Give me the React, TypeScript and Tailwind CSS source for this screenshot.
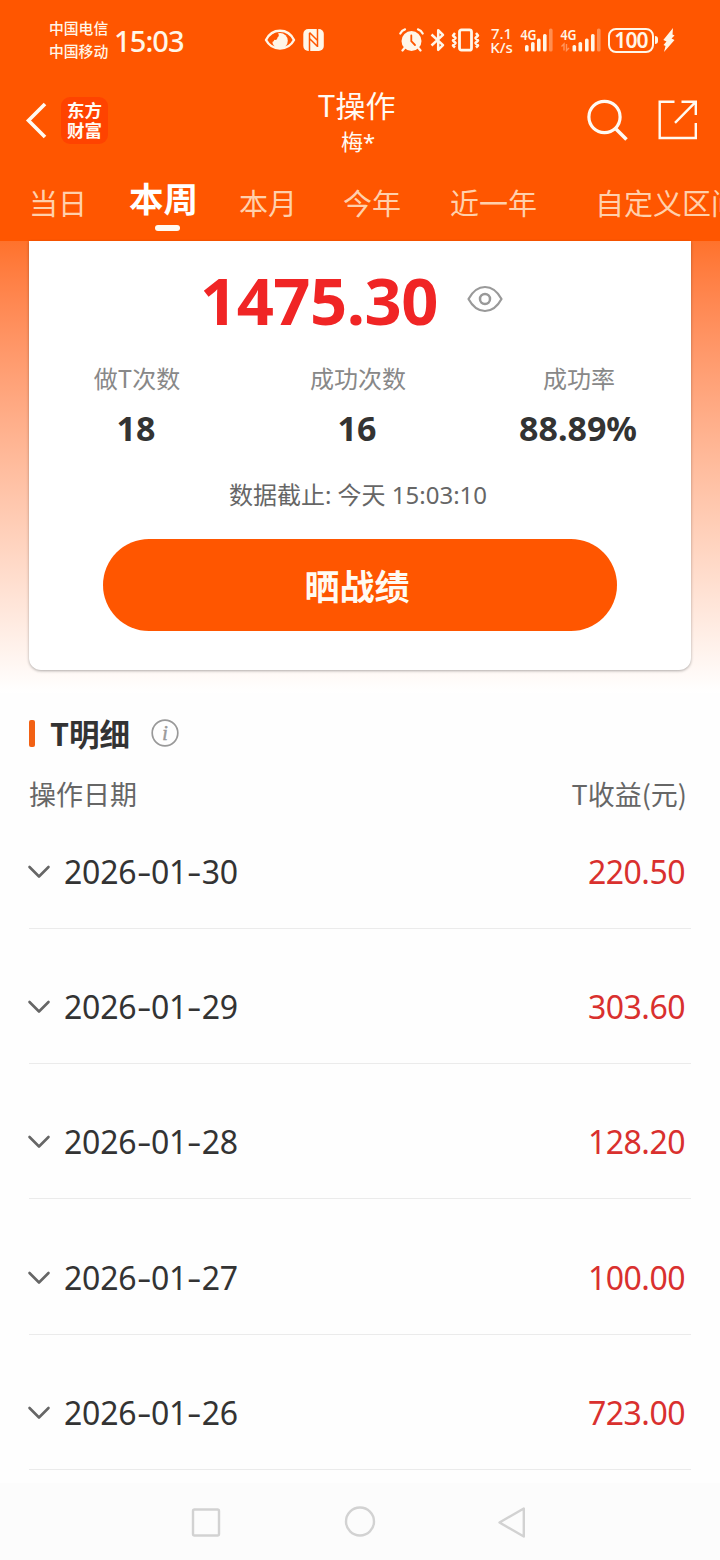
import React from "react";

const records = [
  { date: "2026-01-30", profit: "220.50" },
  { date: "2026-01-29", profit: "303.60" },
  { date: "2026-01-28", profit: "128.20" },
  { date: "2026-01-27", profit: "100.00" },
  { date: "2026-01-26", profit: "723.00" },
];

function SignalBars({ levels }: { levels: number[][] }) {
  return (
    <>
      {levels.map(([x, y, o], i) => (
        <rect key={i} x={x} y={y} width="3.6" height={23.5 - y} rx="1.6" fillOpacity={o} />
      ))}
    </>
  );
}

function StatusBar() {
  return (
    <div className="flex h-20 items-center pl-[49px] text-[#fff6e8]">
      <div className="w-[65px] shrink-0 pb-px text-[14.8px] leading-[22.5px] font-medium whitespace-nowrap">
        <div>中国电信</div>
        <div>中国移动</div>
      </div>
      <div className="w-[150px] shrink-0 pt-[2px] font-['Noto_Sans','Noto_Sans_CJK_SC',sans-serif] text-[29px] leading-8 font-medium tracking-[-0.9px]">
        15:03
      </div>
      <svg className="mr-[7px] shrink-0" width="32" height="24" viewBox="0 0 32 24" fill="none">
        <path d="M2 12C8 -.3 24 -.3 30 12C24 23.300 8 23.300 2 12Z" stroke="currentColor" strokeWidth="2.400" strokeLinejoin="round" />
        <circle cx="16" cy="12.800" r="7.800" fill="currentColor" />
        <path d="M6.500 11.500Q8 5 13.800 4.800Q16 8 13.500 9.500Q13.500 12.500 10.500 11.800Q9.500 14 8 14Z" fill="#ff5600" />
      </svg>
      <svg className="shrink-0" width="21" height="24" viewBox="0 0 21 24">
        <rect x=".3" y="1" width="20.500" height="22" rx="5" fill="currentColor" />
        <path d="M6.500 5V23M14.500 1V19M6.500 4.500L14.500 12.500M6.500 10.500L14.500 18.500" fill="none" stroke="#ff5600" strokeWidth="1.500" />
      </svg>
      <svg className="ml-[75px] shrink-0" width="25" height="24" viewBox="0 0 25 24" fill="none" stroke="currentColor" strokeLinecap="round">
        <circle cx="12.500" cy="13" r="10" fill="currentColor" stroke="none" />
        <path d="M1.300 5.500Q2.800 2.300 6 1.400M19 1.400Q22.200 2.300 23.700 5.500M5.500 20L3.500 22.500M19.500 20L21.500 22.500" strokeWidth="2.200" />
        <path d="M12.300 7.500V13.200L16 17" stroke="#ff5600" strokeWidth="1.800" />
      </svg>
      <svg className="ml-[6px] shrink-0" width="16" height="24" viewBox="0 0 16 24" fill="none" stroke="currentColor" strokeWidth="2.500" strokeLinejoin="round">
        <path d="M1.500 6.500L13 17.200L8.200 21.800V2.200L13 6.800L1.500 17.500" />
      </svg>
      <svg className="ml-[5px] shrink-0" width="29" height="24" viewBox="0 0 29 24" fill="none" stroke="currentColor" strokeWidth="2.500" strokeLinejoin="round">
        <rect x="8.500" y="1.800" width="12" height="20.400" rx="2" strokeWidth="2.800" />
        <path d="M4 5L2 7.500L4.500 10L2 12.500L4.500 15L2 17.500L4 19.500M25 5L27 7.500L24.500 10L27 12.500L24.500 15L27 17.500L25 19.500" />
      </svg>
      <div className="ml-[8px] w-[27px] shrink-0 text-center font-['Noto_Sans',sans-serif] text-[15px] leading-[14px] font-medium">
        <div>7.1</div>
        <div>K/s</div>
      </div>
      <svg className="ml-[5px] shrink-0" width="34" height="24" viewBox="0 0 34 24" fill="currentColor">
        <text x="0.500" y="12" fontSize="14" fontWeight="600" textLength="16" lengthAdjust="spacingAndGlyphs" fontFamily="Noto Sans">4G</text>
        <SignalBars levels={[[5, 17, 1], [11, 14, 1], [17, 10.5, 1], [23, 6, 1], [29, 0.5, 0.35]]} />
      </svg>
      <svg className="ml-[6px] shrink-0" width="42" height="24" viewBox="0 0 42 24" fill="currentColor">
        <text x="0.500" y="12" fontSize="14" fontWeight="600" textLength="16" lengthAdjust="spacingAndGlyphs" fontFamily="Noto Sans">4G</text>
        <path d="M1.500 18.500L4 16V22.500M6.500 16V22.500L9 20" fill="none" stroke="currentColor" strokeOpacity=".4" strokeWidth="1.400" />
        <SignalBars levels={[[12.5, 17, 1], [18.5, 14, 1], [25, 10.5, 1], [31, 6, 1], [37, 0.5, 0.35]]} />
      </svg>
      <div className="ml-[6px] flex h-[25px] w-[46px] shrink-0 items-center justify-center rounded-[8px] border-2 border-current font-['Noto_Sans',sans-serif] text-[21px] leading-5 font-semibold tracking-[-0.8px]">
        100
      </div>
      <div className="ml-px h-2 w-[3px] shrink-0 rounded-r-full bg-current" />
      <svg className="ml-[5px] shrink-0" width="12" height="24" viewBox="0 0 12 24" fill="currentColor">
        <path d="M10 0L.3 12L3.500 13.500L.5 17L2.500 18L1 24L11.500 12L8.500 10.500L11.500 7.500L9.500 6.500Z" />
      </svg>
    </div>
  );
}

function TitleBar() {
  return (
    <div className="flex h-[80px] items-center text-[#fffaf2]">
      <svg className="ml-6 shrink-0" width="24" height="38" viewBox="0 0 24 38" fill="none" stroke="currentColor" strokeWidth="3.600">
        <path d="M21 3L4.500 19.500L21 36" />
      </svg>
      <div className="ml-[13px] flex h-[47px] w-[47px] shrink-0 flex-col items-center justify-center rounded-[9px] bg-[#ff4300] font-['Noto_Sans_CJK_SC',sans-serif] text-[17.500px] leading-[20px] font-bold">
        <span>东方</span>
        <span>财富</span>
      </div>
      <div className="w-[497px] shrink-0 pt-[3px] text-center">
        <div className="text-[30px] leading-[38px]">T操作</div>
        <div className="pl-[3px] text-[22px] leading-[35px]">
          梅<span className="font-['Noto_Sans',sans-serif]">*</span>
        </div>
      </div>
      <svg className="-ml-[21px] shrink-0" width="44" height="44" viewBox="0 0 44 44" fill="none" stroke="currentColor" strokeWidth="3.200">
        <circle cx="20.500" cy="19" r="15.600" />
        <path d="M31.500 30.500L42.500 41.500" strokeWidth="3.600" />
      </svg>
      <svg className="ml-[29px] shrink-0" width="42" height="42" viewBox="0 0 42 42" fill="none" stroke="currentColor" strokeWidth="2.400">
        <path d="M17.500 2.700H2.700V39H38.800V24M24.500 2.700H38.800V16M38.200 3.300L18 23.800" />
      </svg>
    </div>
  );
}

function Tabs() {
  return (
    <div className="flex h-[81px] overflow-hidden pt-[21px] pl-[29px] text-[29px] leading-[42px] whitespace-nowrap text-[#ffd0ac]">
      <span>当日</span>
      <div className="-mt-[5px] ml-[42px] flex h-[60px] flex-col items-center text-[34.500px] leading-[42px] font-bold text-white">
        <span>本周</span>
        <span className="mt-[7px] ml-[7px] h-[6px] w-[25px] shrink-0 rounded-full bg-[#fffaf2]" />
      </div>
      <span className="ml-[41px]">本月</span>
      <span className="ml-[46px]">今年</span>
      <span className="ml-[49px]">近一年</span>
      <span className="ml-[58px]">自定义区间</span>
    </div>
  );
}

function Stat({ label, value }: { label: string; value: string }) {
  return (
    <div className="flex flex-col items-center">
      <span className="-mt-px text-[24px] leading-9 text-[#888]">{label}</span>
      <span className="mt-[11px] pr-[2px] font-['Noto_Sans',sans-serif] text-[34px] leading-[42px] font-bold text-[#333]">{value}</span>
    </div>
  );
}

function SummaryCard() {
  return (
    <section className="h-[452px] bg-linear-to-b from-[#ff722b] to-white px-[29px]">
      <div className="flex h-[429px] flex-col rounded-b-[12px] bg-white shadow-[0_1px_3px_rgba(0,0,0,0.32)]">
        <div className="flex h-[120px] items-center pl-[171px]">
          <span className="w-[267px] pb-[2px] font-['Noto_Sans',sans-serif] text-[65px] leading-[70px] font-bold tracking-[-0.5px] text-[#f02525]">1475.30</span>
          <svg className="-mt-1" width="36" height="28" viewBox="0 0 36 28" fill="none" stroke="#999" strokeWidth="2.200">
            <path d="M1.500 14Q8 2 18 2T34.500 14Q28 26 18 26T1.500 14Z" strokeLinejoin="round" />
            <circle cx="18" cy="14" r="5" strokeWidth="2.500" />
          </svg>
        </div>
        <div className="grid grid-cols-[216px_226px_216px]">
          <Stat label="做T次数" value="18" />
          <Stat label="成功次数" value="16" />
          <Stat label="成功率" value="88.89%" />
        </div>
        <div className="mt-[28px] pr-1 text-center font-['Noto_Sans','Noto_Sans_CJK_SC',sans-serif] text-[24px] leading-9 text-[#666]">
          数据截止: 今天 15:03:10
        </div>
        <button className="mt-[26px] h-[92px] w-[514px] self-center rounded-full bg-[#ff5600] pr-[6px] text-[35px] font-bold text-[#fffaf2]">
          晒战绩
        </button>
      </div>
    </section>
  );
}

function RecordDate({ value }: { value: string }) {
  return (
    <span className="tracking-[-0.2px] text-[#333]">
      {value.split("").map((c, i) =>
        c === "-" ? (
          <span key={i} className="inline-block w-[14.500px] text-center">
            <span className="inline-block scale-x-[1.4]">-</span>
          </span>
        ) : (
          <span key={i}>{c}</span>
        )
      )}
    </span>
  );
}

function Details() {
  return (
    <section className="h-[790px] px-[29px]">
      <div className="flex h-[80px] items-center">
        <span className="h-[27px] w-[6px] rounded-[2px] bg-[#f26114]" />
        <h2 className="ml-[15px] w-[81px] pb-px text-[30.500px] leading-10 font-bold whitespace-nowrap text-[#333]">T明细</h2>
        <svg className="ml-[20px]" width="28" height="28" viewBox="0 0 28 28">
          <circle cx="14" cy="14" r="12.800" fill="none" stroke="#999" strokeWidth="1.700" />
          <text x="14" y="21" textAnchor="middle" fontSize="20" fontStyle="italic" fill="#999" stroke="#999" strokeWidth=".5" fontFamily="Liberation Serif">i</text>
        </svg>
      </div>
      <div className="mt-px flex h-[40px] items-center justify-between pt-px pr-[4px] text-[27px] text-[#666]">
        <span>操作日期</span>
        <span>T收益(元)</span>
      </div>
      <div className="-mt-[20.250px]">
        {records.map((r) => (
          <div key={r.date} className="flex h-[135.200px] items-end border-b border-[#ebebeb] pb-[36px] pr-[6px] font-['Noto_Sans',sans-serif] text-[32px] leading-10">
            <svg className="mb-[8px] -ml-[2px] mr-[13px]" width="24" height="24" viewBox="0 0 24 24" fill="none" stroke="#666" strokeWidth="2.600" strokeLinecap="round" strokeLinejoin="round">
              <path d="M2.500 7L12 16.500L21.500 7" />
            </svg>
            <RecordDate value={r.date} />
            <span className="ml-auto tracking-[-0.5px] text-[#d9302e]">{r.profit}</span>
          </div>
        ))}
      </div>
    </section>
  );
}

function NavigationBar() {
  return (
    <nav className="flex h-[77px] items-center bg-[#fcfcfc] pl-[190px] text-[#d2d2d2]">
      <svg width="32" height="32" viewBox="0 0 32 32" fill="none" stroke="currentColor" strokeWidth="2.400">
        <rect x="3" y="3.500" width="26" height="26" rx="1.500" />
      </svg>
      <svg className="ml-[122px]" width="32" height="32" viewBox="0 0 32 32" fill="none" stroke="currentColor" strokeWidth="2.400">
        <circle cx="16" cy="15.500" r="14" />
      </svg>
      <svg className="ml-[122px]" width="32" height="32" viewBox="0 0 32 32" fill="none" stroke="currentColor" strokeWidth="2.400" strokeLinejoin="round">
        <path d="M1.500 16.500L25.800 2.500V30.500Z" />
      </svg>
    </nav>
  );
}

export default function App() {
  return (
    <main className="h-[1560px] w-[720px] overflow-hidden bg-[#fefefe] font-['Noto_Sans_CJK_SC',sans-serif]">
      <header className="h-[241px] bg-[#ff5600]">
        <StatusBar />
        <TitleBar />
        <Tabs />
      </header>
      <SummaryCard />
      <Details />
      <NavigationBar />
    </main>
  );
}
